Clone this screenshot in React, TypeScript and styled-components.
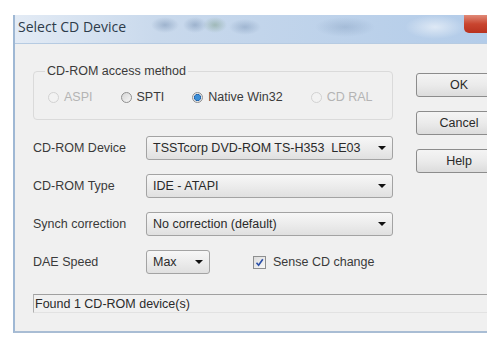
import { Fragment } from 'react';
import styled, { createGlobalStyle } from 'styled-components';

const GlobalStyle = createGlobalStyle`
  html, body {
    margin: 0;
    padding: 0;
    background: #ffffff;
  }
  body {
    font-family: "Liberation Sans", Arial, sans-serif;
    font-size: 12.5px;
    color: #3a3a3a;
  }
`;

const Window = styled.div`
  margin: 15px 0 0 13px;
  width: 474px;
  height: 318px;
  box-sizing: border-box;
  border-left: 2px solid #9fb8d4;
  border-bottom: 2px solid #a9bdd4;
  background: #f0f0f0;
  overflow: hidden;
  display: flex;
  flex-direction: column;
`;

const TitleBar = styled.div`
  height: 28px;
  flex-shrink: 0;
  display: flex;
  justify-content: space-between;
  align-items: flex-start;
  background:
    radial-gradient(ellipse 14px 8px at 150px 10px, rgba(80, 110, 150, 0.35), transparent),
    radial-gradient(ellipse 12px 8px at 180px 10px, rgba(80, 110, 150, 0.35), transparent),
    radial-gradient(ellipse 12px 8px at 200px 10px, rgba(90, 130, 90, 0.35), transparent),
    radial-gradient(ellipse 16px 8px at 230px 12px, rgba(80, 110, 150, 0.3), transparent),
    radial-gradient(ellipse 30px 10px at 330px 12px, rgba(80, 110, 150, 0.22), transparent),
    radial-gradient(ellipse 30px 12px at 420px 12px, rgba(255, 255, 255, 0.55), transparent),
    linear-gradient(to right, #e3ebf5 0%, #c9d9ec 30%, #b3cce9 100%);
  border-bottom: 1px solid #b6cbe2;
`;

const Title = styled.span`
  font-family: "Open Sans", "Noto Sans", sans-serif;
  font-size: 14px;
  line-height: 24px;
  padding-left: 3px;
  color: #2d3b4a;
`;

const CloseButton = styled.div`
  width: 23px;
  height: 18px;
  border-radius: 0 0 0 5px;
  background: linear-gradient(to bottom, #e08a78 0%, #c9452f 50%, #b8321f 100%);
`;

const Body = styled.div`
  flex: 1;
  display: flex;
  flex-direction: column;
`;

const Main = styled.div`
  display: flex;
`;

const LeftColumn = styled.div`
  width: 360px;
  padding: 19px 0 0 18px;
`;

const GroupBox = styled.fieldset`
  margin: 0;
  width: 360px;
  box-sizing: border-box;
  border: 1px solid #dadada;
  border-radius: 4px;
  padding: 8px 14px 12px;
`;

const Legend = styled.legend`
  padding: 0 2px;
  margin-left: -3px;
  font-size: 12.5px;
  line-height: 16px;
  color: #3a3a3a;
`;

const RadioRow = styled.div`
  display: flex;
  align-items: center;
  gap: 28px;
  height: 20px;
`;

const RadioItem = styled.label<{ $disabled?: boolean }>`
  display: flex;
  align-items: center;
  gap: 5px;
  color: ${({ $disabled }) => ($disabled ? '#b4b4b4' : '#3a3a3a')};
`;

const RadioCircle = styled.span<{ $checked?: boolean; $disabled?: boolean }>`
  width: 11px;
  height: 11px;
  border-radius: 50%;
  box-sizing: border-box;
  border: 1px solid ${({ $disabled }) => ($disabled ? '#d2d2d2' : '#8f8f8f')};
  background: ${({ $checked, $disabled }) =>
    $checked
      ? 'radial-gradient(circle, #3d8fd6 0 2.6px, #1d5fa8 3.2px, #e6e6e6 3.8px, #f7f7f7 100%)'
      : $disabled
        ? '#f2f2f2'
        : 'linear-gradient(135deg, #d6d6d6, #f6f6f6)'};
`;

const FormGrid = styled.div`
  margin-top: 16px;
  display: grid;
  grid-template-columns: 113px 247px;
  row-gap: 14px;
  align-items: center;
`;

const Label = styled.span`
  color: #3a3a3a;
`;

const Combo = styled.div<{ $width?: number }>`
  width: ${({ $width }) => ($width ? `${$width}px` : '100%')};
  height: 24px;
  box-sizing: border-box;
  border: 1px solid #a3a3a3;
  border-radius: 3px;
  background: linear-gradient(to bottom, #f7f7f7 0%, #ececec 50%, #e0e0e0 100%);
  display: flex;
  align-items: center;
  justify-content: space-between;
  padding: 0 5px 0 6px;
  color: #2a2a2a;
  white-space: pre;
`;

const Arrow = styled.span`
  width: 0;
  height: 0;
  border-left: 4px solid transparent;
  border-right: 4px solid transparent;
  border-top: 4px solid #111;
  margin-right: 1px;
`;

const SpeedRow = styled.div`
  display: flex;
  align-items: center;
  gap: 43px;
`;

const CheckItem = styled.label`
  display: flex;
  align-items: center;
  gap: 7px;
  color: #3a3a3a;
`;

const CheckBox = styled.span`
  width: 13px;
  height: 13px;
  box-sizing: border-box;
  border: 1px solid #8e8f8f;
  background: linear-gradient(135deg, #dcdcdc, #f8f8f8);
  display: flex;
  align-items: center;
  justify-content: center;
`;

const ButtonColumn = styled.div`
  margin-left: 23px;
  padding-top: 29px;
  display: flex;
  flex-direction: column;
  gap: 14px;
`;

const Button = styled.div`
  width: 86px;
  height: 24px;
  box-sizing: border-box;
  border: 1px solid #8c8c8c;
  border-radius: 3px;
  background: linear-gradient(to bottom, #f4f4f4 0%, #ebebeb 50%, #dcdcdc 100%);
  display: flex;
  align-items: center;
  justify-content: center;
  color: #2a2a2a;
`;

const StatusBar = styled.div`
  margin: 20px 0 0 18px;
  height: 17px;
  border-top: 1px solid #a0a0a0;
  border-left: 1px solid #b0b0b0;
  border-bottom: 1px solid #e2e2e2;
  padding-left: 1px;
  display: flex;
  align-items: center;
  color: #2a2a2a;
`;

const radios = [
  { name: 'ASPI', disabled: true },
  { name: 'SPTI' },
  { name: 'Native Win32', checked: true },
  { name: 'CD RAL', disabled: true },
];

const combos = [
  { label: 'CD-ROM Device', value: 'TSSTcorp DVD-ROM TS-H353  LE03' },
  { label: 'CD-ROM Type', value: 'IDE - ATAPI' },
  { label: 'Synch correction', value: 'No correction (default)' },
];

export default function App() {
  return (
    <>
      <GlobalStyle />
      <Window>
        <TitleBar>
          <Title>Select CD Device</Title>
          <CloseButton />
        </TitleBar>
        <Body>
          <Main>
            <LeftColumn>
              <GroupBox>
                <Legend>CD-ROM access method</Legend>
                <RadioRow>
                  {radios.map((r) => (
                    <RadioItem key={r.name} $disabled={r.disabled}>
                      <RadioCircle $checked={r.checked} $disabled={r.disabled} />
                      {r.name}
                    </RadioItem>
                  ))}
                </RadioRow>
              </GroupBox>
              <FormGrid>
                {combos.map((c) => (
                  <Fragment key={c.label}>
                    <Label>{c.label}</Label>
                    <Combo>
                      {c.value}
                      <Arrow />
                    </Combo>
                  </Fragment>
                ))}
                <Label>DAE Speed</Label>
                <SpeedRow>
                  <Combo $width={64}>
                    Max
                    <Arrow />
                  </Combo>
                  <CheckItem>
                    <CheckBox>
                      <svg width="9" height="9" viewBox="0 0 9 9">
                        <path d="M1.5 4.8 L3.6 7.2 L7.8 1.2" fill="none" stroke="#2a4fa8" strokeWidth="1.6" />
                      </svg>
                    </CheckBox>
                    Sense CD change
                  </CheckItem>
                </SpeedRow>
              </FormGrid>
            </LeftColumn>
            <ButtonColumn>
              <Button>OK</Button>
              <Button>Cancel</Button>
              <Button>Help</Button>
            </ButtonColumn>
          </Main>
          <StatusBar>Found 1 CD-ROM device(s)</StatusBar>
        </Body>
      </Window>
    </>
  );
}
